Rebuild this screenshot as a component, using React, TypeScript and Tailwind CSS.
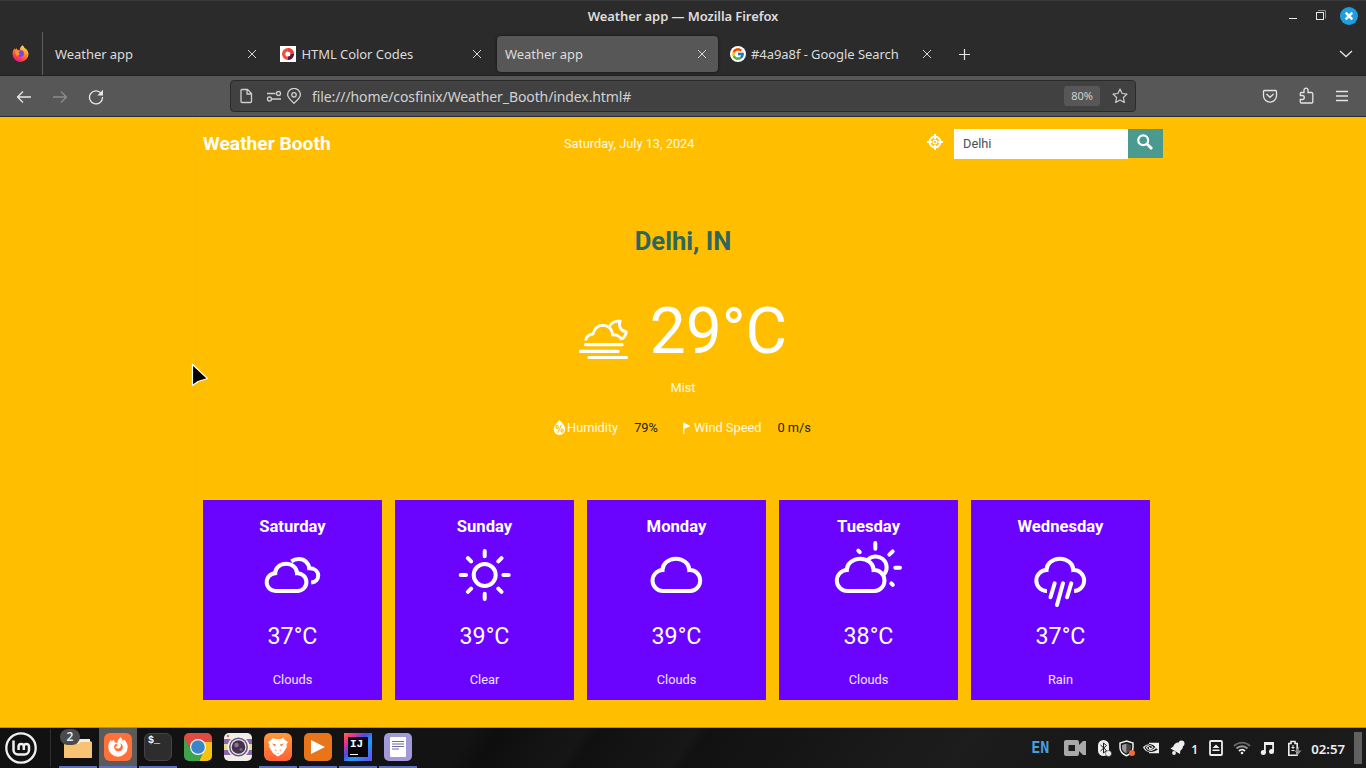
import type { ReactNode } from "react";
import { FcGoogle } from "react-icons/fc";
import { SiNvidia } from "react-icons/si";
import { WiHumidity } from "react-icons/wi";

function CloseX() {
  return (
    <svg width="10" height="10" viewBox="0 0 10 10" className="shrink-0" fill="none" stroke="#d8d8d8" strokeWidth="1">
      <path d="M1 1l8 8M9 1l-8 8" />
    </svg>
  );
}

function Tab({ title, active, icon }: { title: string; active?: boolean; icon?: ReactNode }) {
  return (
    <div className={`flex h-9 w-[221px] shrink-0 items-center rounded pr-[11px] pl-2 ${active ? "bg-[#575757] shadow-[0_0_3px_#111]" : ""}`}>
      {icon}
      <span className="flex-1 pt-0.5 tracking-[-0.06px] whitespace-nowrap">{title}</span>
      <CloseX />
    </div>
  );
}

function FirefoxLogo() {
  return (
    <svg width="17" height="17" viewBox="0 0 17 17">
      <defs>
        <linearGradient id="fx" x1="0.8" y1="0" x2="0.3" y2="1">
          <stop offset="0" stopColor="#fff04a" />
          <stop offset="0.45" stopColor="#ff8a26" />
          <stop offset="0.75" stopColor="#ff3d50" />
          <stop offset="1" stopColor="#e31587" />
        </linearGradient>
      </defs>
      <path d="M10.500.3c1 .7 1.600 1.600 2 2.600 2.400 1 4 3.500 4 6A8 8 0 0 1 .5 9c0-2.600.8-4.300 2-5.800L3 4.700 4.500 3.200l.8 1.600c1 0 1.900.2 2.400.6C7.800 3.400 8.800 1.400 10.500.3Z" fill="url(#fx)" />
      <circle cx="8.600" cy="8.600" r="3.300" fill="#7a3ff0" />
      <path d="M3.500 6.500c1.800-.8 3.700-.5 4.800.3-1 .1-1.700.8-1.900 1.400 1 .3 1.600.6 1.300 1.300-.6.7-1.800.5-2.400 1.500C3.700 10 3.200 8.300 3.500 6.500Z" fill="#ff9526" />
    </svg>
  );
}

function ColorCodesLogo() {
  return (
    <svg width="16" height="16" viewBox="0 0 16 16" className="mr-[5.5px]">
      <rect width="16" height="16" fill="#fff" />
      <g fill="none" strokeWidth="3.400">
        <circle cx="8" cy="8" r="4.300" stroke="#f0503c" />
        <path d="M12.300 8A4.300 4.300 0 0 1 8 12.300" stroke="#5a1240" />
        <path d="M8 3.700A4.300 4.300 0 0 1 12.300 8" stroke="#f03c34" />
      </g>
    </svg>
  );
}

function TitleBar() {
  return (
    <div className="flex h-8 items-center border-t border-[#3a3a3a]">
      <div className="w-[200px]" />
      <div className="flex-1 pb-0.5 text-center text-[13px] leading-4 font-semibold tracking-[-0.08px] text-[#dedede]">
        Weather app — Mozilla Firefox
      </div>
      <div className="flex w-[200px] items-center justify-end pr-2">
        <svg width="70" height="18" viewBox="0 0 70 18" fill="none" className="mb-px overflow-visible">
          <path d="M1 11.500h8" stroke="#e8e8e8" />
          <path d="M30 3.500h7.500v8" stroke="#8d8d8d" />
          <rect x="28.500" y="5.500" width="7" height="7" stroke="#e8e8e8" />
          <circle cx="61" cy="9" r="9" fill="#1e9ee0" />
          <path d="M57.700 5.700l6.600 6.600M64.300 5.700l-6.600 6.600" stroke="#fff" strokeWidth="2.400" />
        </svg>
      </div>
    </div>
  );
}

function TabStrip() {
  return (
    <div className="flex h-11 items-center border-b border-[#202020] text-[13px] text-[#dcdcdc]">
      <div className="flex h-full w-[43px] shrink-0 items-center border-r border-[#5e5e5e] pl-3">
        <FirefoxLogo />
      </div>
      <div className="ml-1 flex gap-1 pt-px">
        <Tab title="Weather app" />
        <Tab title="HTML Color Codes" icon={<ColorCodesLogo />} />
        <Tab title="Weather app" active />
        <Tab
          title="#4a9a8f - Google Search"
          icon={
            <span className="mr-[5px] flex size-4 items-center justify-center rounded-full bg-white">
              <FcGoogle size={14} />
            </span>
          }
        />
      </div>
      <svg width="13" height="13" viewBox="0 0 13 13" className="mt-px ml-[15px]" stroke="#e4e4e4" strokeWidth="1.200">
        <path d="M6.500 1v11M1 6.500h11" />
      </svg>
      <svg width="14" height="8" viewBox="0 0 14 8" className="mr-[13px] ml-auto" fill="none" stroke="#e4e4e4" strokeWidth="1.300">
        <path d="M1 1l6 5.500L13 1" />
      </svg>
    </div>
  );
}

function AddressBar() {
  return (
    <div className="flex h-[41px] items-center border-b border-[#2b2b2b] bg-[#575757]">
      <svg width="88" height="16" viewBox="0 0 88 16" className="mt-px ml-4 shrink-0" fill="none" stroke="#e8e8e8" strokeWidth="1.300">
        <path d="M15 8H1.500M7 2.500L1.500 8 7 13.500" />
        <path d="M37 8h13.500M45 2.500L50.500 8 45 13.500" stroke="#8c8c8c" />
        <path d="M85 4.200A6.500 6.500 0 1 0 86.500 8" />
        <path d="M87 .8v5.700h-5.700z" fill="#e8e8e8" stroke="none" />
      </svg>
      <div className="ml-[126px] flex h-8 w-[906px] items-center rounded border border-[#2a2a2a] bg-[#414141]">
        <svg width="62" height="16" viewBox="0 0 62 16" className="ml-[9px] shrink-0" fill="none" stroke="#cfcfcf" strokeWidth="1.300">
          <path d="M2 1.500H7.500L11.500 5.500v8a1 1 0 0 1-1 1H2a1 1 0 0 1-1-1v-11a1 1 0 0 1 1-1ZM7 1.500V6h4.500" />
          <path d="M27 5.500h8.500M32 11h9" />
          <circle cx="38.500" cy="5.500" r="2" />
          <circle cx="29.500" cy="11" r="2" />
          <path d="M54 15.200C50.500 12 47.600 9.600 47.600 6.800a6.400 6.400 0 0 1 12.800 0c0 2.800-2.900 5.400-6.400 8.400Z" />
          <circle cx="54" cy="6.800" r="2.200" />
        </svg>
        <span className="pl-[10px] text-[14px] tracking-[-0.1px] whitespace-nowrap text-[#d2d2d2]">
          file:///home/cosfinix/Weather_Booth/index.html#
        </span>
        <span className="ml-auto flex h-5 w-9 items-center justify-center rounded-[3px] bg-[#575757] text-[11px] text-[#d2d2d2]">80%</span>
        <svg width="16" height="16" viewBox="0 0 16 16" className="mr-[7px] ml-3" fill="none" stroke="#cfcfcf" strokeWidth="1.200" strokeLinejoin="round">
          <path d="M8 1l2.100 4.500 4.900.6-3.600 3.400.9 5L8 12l-4.300 2.500.9-5L1 6.100l4.900-.6z" />
        </svg>
      </div>
      <svg width="88" height="18" viewBox="0 0 88 18" className="mr-[16px] ml-auto shrink-0" fill="none" stroke="#e4e4e4" strokeWidth="1.300">
        <path d="M2.500 3.500h11a1 1 0 0 1 1 1v4.200a6.500 6.500 0 0 1-13 0V4.500a1 1 0 0 1 1-1Z" />
        <path d="M4.500 7L8 10.300 11.500 7" />
        <path d="M42 5.500V3.200a2 2 0 0 1 4 0v2.300H49.500a1.300 1.300 0 0 1 1.300 1.300V15a1 1 0 0 1-1 1h-10.500a1 1 0 0 1-1-1v-2.500h2a2 2 0 0 0 0-4h-2V6.500a1 1 0 0 1 1-1z" />
        <path d="M74 4.500h12M74 9h12M74 13.500h12" />
      </svg>
    </div>
  );
}

const cloudPath = "M76.500 51a10 10 0 0 1 -1-20.900a13 11 0 0 1 26.800 0a10 10 0 0 1 .9 20.900z";

function CardIcon({ children }: { children: ReactNode }) {
  return (
    <svg width="179" height="70" viewBox="0 0 179 70" fill="none" stroke="#fff" strokeWidth="4" strokeLinecap="round">
      {children}
    </svg>
  );
}

const forecast = [
  {
    day: "Saturday",
    temp: "37°C",
    text: "Clouds",
    icon: (
      <CardIcon>
        <path d="M73 51a8 8 0 0 1 -.8-17.800a10.500 9 0 0 1 21.800 0a8 8 0 0 1 1 17.800z" />
        <path strokeLinecap="butt" d="M88.300 21.300C90.500 19.700 93.500 19 96 19c5.500 0 9.800 4 10.200 9.300c5 0 9 2.800 9 7.200 0 4-2.700 6.700-7 7" />
      </CardIcon>
    ),
  },
  {
    day: "Sunday",
    temp: "39°C",
    text: "Clear",
    icon: (
      <CardIcon>
        <circle cx="89.700" cy="35" r="11" />
        <path d="M89.700 11v5.300M89.700 53.700V59M65.700 35H71M108.400 35h5.300M72.900 18.200l3.200 3.200M103.300 48.600l3.200 3.200M72.900 51.800l3.200-3.200M103.300 21.400l3.200-3.200" />
      </CardIcon>
    ),
  },
  {
    day: "Monday",
    temp: "39°C",
    text: "Clouds",
    icon: (
      <CardIcon>
        <path d={cloudPath} />
      </CardIcon>
    ),
  },
  {
    day: "Tuesday",
    temp: "38°C",
    text: "Clouds",
    icon: (
      <CardIcon>
        <path d={cloudPath} transform="translate(-7.700 0)" />
        <path d="M88.600 19.900A11 11 0 0 1 105.800 33.500" />
        <path d="M96.300 3v5.700M113.700 11.300l-3.400 3.400M116.300 27.700h4.700M79.300 10.700l1.500 1.500M112.300 43.300l1.500 1.500" />
      </CardIcon>
    ),
  },
  {
    day: "Wednesday",
    temp: "37°C",
    text: "Rain",
    icon: (
      <CardIcon>
        <path strokeLinecap="butt" d="M76 51a10 10 0 0 1 -.5-20.900a13 11 0 0 1 26.800 0a10 10 0 0 1 .8 20.900" />
        <path d="M83.700 43.300l-4.200 14M92 43.300L86 65M100.300 43.300l-4.200 14" />
      </CardIcon>
    ),
  },
];

function WeatherPage() {
  return (
    <main className="relative h-[611px] border-b border-[#c19100] bg-[#ffbf00] font-[Roboto,sans-serif] text-white">
      <div className="absolute top-0 left-[195px] h-full w-px bg-black/[0.025]" />
      <div className="mx-auto flex w-[960px] flex-col">
        <header className="flex h-[54px] items-center">
          <h1 className="w-[361px] text-[19.200px] leading-6 font-bold">Weather Booth</h1>
          <span className="text-[12.800px] text-white/90">Saturday, July 13, 2024</span>
          <div className="ml-auto flex items-start">
            <svg width="16" height="16" viewBox="0 0 16 16" className="mt-[5px] mr-[11px]" fill="none" stroke="#fff" strokeWidth="2">
              <circle cx="8" cy="8" r="5.400" />
              <path d="M8 0v5M8 11v5M0 8h5M11 8h5" />
              <circle cx="8" cy="8" r="1.800" strokeWidth="1.400" />
            </svg>
            <div className="flex h-[30px] w-[174px] items-center bg-white pl-[9px] text-[12.800px] text-[#495057]">Delhi</div>
            <button className="flex h-[29px] w-[35px] items-start justify-center bg-[#4a9a8f] pt-[5px] pr-px">
              <svg width="16" height="16" viewBox="0 0 16 16" fill="none" stroke="#fff">
                <circle cx="6.200" cy="6.200" r="4.900" strokeWidth="2.200" />
                <path d="M9.800 9.800L15 15" strokeWidth="2.800" />
              </svg>
            </button>
          </div>
        </header>
        <section className="flex flex-col items-center">
          <h2 className="mt-[54px] text-[25.600px] leading-8 font-bold text-[#2f655c]">Delhi, IN</h2>
          <div className="mt-[37px] flex h-[76px] items-start">
            <svg width="50" height="41" viewBox="0 0 50 41" className="mt-[25px] mr-[21px]" fill="none" stroke="#fff" strokeWidth="3.200" strokeLinecap="round">
              <path d="M6.500 25.700h36.500M1.200 32.300h38M10 38.500h37.500" />
              <g strokeWidth="2.800" strokeLinecap="butt" strokeLinejoin="round">
                <path d="M6.500 21.500C7.500 17.500 10.500 15.300 14 15c1.300-5.500 5-8.700 10-8.700 5.300 0 9.400 4 9.500 9.700 4-.5 7.500 1.500 9.300 4.700" />
                <path d="M30.500 7.300C32.500 3.500 36.500 1.500 41.300 2.200c-2.300 4.600.5 10 6 10.600-.3 3-2 5.500-4.500 7.200" />
              </g>
            </svg>
            <div className="text-[64px] leading-[76px]">29°C</div>
          </div>
          <div className="mt-2 text-[12.800px] leading-5 text-white/90">Mist</div>
          <div className="mt-5 flex h-5 items-center text-[12.800px] leading-5">
            <WiHumidity size={23} className="mb-px -mr-[4px] -ml-[7px]" />
            <span className="text-white/90">Humidity</span>
            <span className="ml-4 text-[#212529]">79%</span>
            <svg width="8" height="12" viewBox="0 0 8 12" className="ml-[25px]" fill="#fff">
              <path d="M.3.500h1.100V12H.3zM1.400 1L7.500 4 1.400 6.800z" />
            </svg>
            <span className="ml-[3px] text-white/90">Wind Speed</span>
            <span className="ml-4 text-[#212529]">0 m/s</span>
          </div>
        </section>
        <section className="mt-[62px] flex gap-[13px]">
          {forecast.map((f) => (
            <article key={f.day} className="flex h-[200px] w-[179px] shrink-0 flex-col items-center bg-[#6a04ff]">
              <h3 className="mt-[15px] text-[16.640px] leading-6 font-bold">{f.day}</h3>
              <div className="mt-px h-[70px]">{f.icon}</div>
              <div className="mt-[11px] text-[23.200px] leading-[30px] text-white">{f.temp}</div>
              <div className="mt-[19px] text-[12.800px] leading-5 text-white/90">{f.text}</div>
            </article>
          ))}
        </section>
      </div>
      <svg width="20" height="26" viewBox="0 0 20 26" className="absolute top-[246px] left-[190px]">
        <path d="M2.500 1.500V22.500L8 18.500 17.500 15.500z" fill="#000" stroke="#fff" strokeWidth="1.200" strokeLinejoin="round" />
      </svg>
    </main>
  );
}

function Launcher({ children, open, active }: { children: ReactNode; open?: boolean; active?: boolean }) {
  return (
    <div className={`relative flex h-10 w-[38px] justify-center border-b-2 pt-[5px] ${open ? "border-[#5b6fc4]" : "border-transparent"} ${active ? "bg-[#5a5a5a]" : ""}`}>
      {children}
    </div>
  );
}

function Taskbar() {
  return (
    <footer className="flex h-10 items-start bg-[#141414] bg-[linear-gradient(125deg,#111_0%,#131313_34%,#0e0e0e_36%,#161616_42%,#101010_43%,#171717_50%,#111_51%,#181818_62%,#1d1d1d_70%,#171717_80%,#1b1b1b_100%)]">
      <svg width="51" height="40" viewBox="0 0 51 40" className="shrink-0" fill="none" stroke="#f0f0f0">
        <circle cx="21" cy="20" r="14.700" strokeWidth="2.300" />
        <path d="M13.500 12.500V22a4.500 4.500 0 0 0 4.500 4.500h6.500a4.500 4.500 0 0 0 4.500-4.500v-3.500a2.600 2.600 0 0 0-5.200 0V22M23.800 18.500a2.600 2.600 0 0 0-5.200 0V22" strokeWidth="2.500" />
        <path d="M50.500 1v38" stroke="#2e2e2e" />
      </svg>
      <div className="ml-2 flex gap-[2px]">
        <Launcher open>
          <svg width="30" height="30" viewBox="0 0 30 30">
            <path d="M1 5h12l3 3h11a2 2 0 0 1 2 2v14a1 1 0 0 1-1 1H2a1 1 0 0 1-1-1z" fill="#d49a4e" />
            <path d="M14 6h13v5H14z" fill="#f0ede8" />
            <path d="M1 11h14l3-2h11v15a1 1 0 0 1-1 1H2a1 1 0 0 1-1-1z" fill="#f8c273" />
          </svg>
          <span className="absolute top-px left-px flex h-4 w-5 items-center justify-center rounded-full bg-[#4b4b4b] text-[12px] font-semibold text-[#dce8f4]">2</span>
        </Launcher>
        <Launcher open active>
          <div className="flex size-7 items-center justify-center rounded-md bg-[#ff7139]">
            <svg width="22" height="22" viewBox="0 0 22 22" fill="#fff">
              <path d="M13.500 1c1 1.300 1.900 2.500 2.200 3.700l1.500-1c2.200 2 3.500 4.600 3.500 7.300A9.700 9.700 0 0 1 11 20.700 9.700 9.700 0 0 1 1.300 11c0-3 1-5.500 2.800-7.300l.5 2L6.800 3.500l1 2.800 2.600.8c.2-2.800 1.300-4.700 3.100-6.100Z" />
              <path d="M8.500 8l2.500.8c-.3 1.200-1.500 1.700-2.700 2.200.7 2.200 5 2 5.500-.8.2-1.200-.1-2.300-.6-3.200 2.200 1.300 3.200 3.600 2.400 5.700-1.500 3.600-6.800 3.500-8.200-.2C6.700 10.700 7.300 9 8.500 8Z" fill="#ff7139" />
            </svg>
          </div>
        </Launcher>
        <Launcher open>
          <div className="h-7 w-7 rounded-md border border-[#444] bg-[#2d2d2d] pl-[3px] font-['Liberation_Mono',monospace] text-[10px] leading-[13px] font-bold text-white">
            $_
          </div>
        </Launcher>
        <Launcher>
          <svg width="28" height="28" viewBox="0 0 28 28">
            <clipPath id="chromeClip"><rect width="28" height="28" rx="5" /></clipPath>
            <g clipPath="url(#chromeClip)">
              <path d="M0 0h28v10H14L8 18 0 6z" fill="#e04a40" />
              <path d="M14 9h14v19H15l4-9z" fill="#f7c212" />
              <path d="M0 5l8 13 11 2-4 8H0z" fill="#3fa34d" />
              <circle cx="14" cy="14" r="8" fill="#f5f5f5" />
              <circle cx="14" cy="14" r="6.800" fill="#3a86c8" />
            </g>
          </svg>
        </Launcher>
        <Launcher>
          <svg width="28" height="28" viewBox="0 0 28 28">
            <rect width="28" height="28" rx="5" fill="#efeee8" />
            <path d="M0 6h28v5H0zM0 17h28v5H0z" fill="#8f66ae" />
            <path d="M0 11h28v6H0z" fill="#e6e08c" />
            <circle cx="4" cy="3" r="1.200" fill="#f35b4b" />
            <circle cx="14.500" cy="14" r="11" fill="#f3f1f0" />
            <circle cx="14.500" cy="14" r="9.500" fill="#6a5575" />
            <circle cx="14.500" cy="14" r="8" fill="#e9e6e8" />
            <circle cx="14.500" cy="14" r="6.800" fill="#44334c" />
            <circle cx="12.500" cy="12" r="2.200" fill="#8d7694" />
            <circle cx="17" cy="16.500" r="1.500" fill="#79617f" />
          </svg>
        </Launcher>
        <Launcher open>
          <div className="flex size-7 items-center justify-center rounded-md bg-linear-to-b from-[#ff9a3a] to-[#ff5e34]">
            <svg width="20" height="20" viewBox="0 0 20 20">
              <path d="M5 1l2 1h6l2-1 2.500 2.500L20 5l-1.500 2.500.3 2.500-4 6.500L10 19.500 5.200 16.500 1.200 10l.3-2.500L0 5l2.500-1.500z" fill="#fff" />
              <path d="M4 6.500l4 1L7 9.500zM16 6.500l-4 1 1 2zM6.500 12l2 1.500-.5 1zM13.500 12l-2 1.500.5 1zM8.800 16h2.400L10 16.800z" fill="#fb7138" />
            </svg>
          </div>
        </Launcher>
        <Launcher open>
          <svg width="28" height="28" viewBox="0 0 28 28">
            <rect width="28" height="28" rx="5" fill="#e8751a" />
            <path d="M7 7l14 7-14 7z" fill="#fff" />
          </svg>
        </Launcher>
        <Launcher open>
          <div className="size-7 bg-[linear-gradient(135deg,#ff6a3c_0%,#f02f8f_20%,#4b4ae8_42%,#1f9cf5_60%,#6a4cf0_100%)] p-1">
            <div className="flex size-5 flex-col bg-[#08040c] pt-[3px] pl-[2px] font-['Liberation_Mono',monospace] text-[11px] leading-[9px] font-bold text-white">
              IJ
              <span className="mt-[5px] h-px w-2 bg-white" />
            </div>
          </div>
        </Launcher>
        <Launcher open>
          <svg width="28" height="28" viewBox="0 0 28 28">
            <rect width="28" height="28" rx="5" fill="#a09ad8" />
            <rect x="6" y="4" width="16" height="20" rx="1" fill="#fff" />
            <path d="M8 8.500h12M8 11h12M8 13.500h12M8 16h7" stroke="#6d6aa0" />
          </svg>
        </Launcher>
      </div>
      <div className="ml-auto flex h-10 items-center">
        <span className="-ml-px w-[33px] font-['DejaVu_Sans_Mono',monospace] text-[15px] font-bold text-[#4a9fd8]">EN</span>
        <svg width="22" height="16" viewBox="0 0 22 16" className="mr-3">
          <path d="M2 0h11a2 2 0 0 1 2 2v3l4-4h3v14h-3l-4-4v3a2 2 0 0 1-2 2H2a2 2 0 0 1-2-2V2a2 2 0 0 1 2-2Z" fill="#a9a9a9" />
          <rect x="4.500" y="5" width="6.500" height="6" fill="#1c1c1c" />
        </svg>
        <svg width="14" height="17" viewBox="0 0 14 17" className="mr-[7px]" fill="none">
          <rect x="0" y="0" width="11" height="16" rx="5.500" fill="#eee" />
          <path d="M2.500 5l6 5.500L5.500 13V3l3 2.500-6 5.500" stroke="#1a1a1a" />
          <circle cx="10.500" cy="13.500" r="3" fill="#eee" stroke="#1a1a1a" strokeWidth=".5" />
        </svg>
        <svg width="16" height="17" viewBox="0 0 16 17" className="mr-2">
          <path d="M7.500 1l6.500 2v4.500c0 4-2.500 6.500-6.500 8.300C3.500 14 1 11.500 1 7.500V3z" fill="none" stroke="#eee" strokeWidth="1.500" />
          <path d="M7.500 3.500L12 5v3c0 2.500-2 4.500-4.500 5.500z" fill="#444" />
          <path d="M7.500 3.500L3 5v3c0 2.500 2 4.500 4.500 5.500z" fill="#999" />
          <circle cx="13" cy="13" r="3" fill="#f26a35" />
        </svg>
        <SiNvidia size={16} color="#eee" className="mr-[11px]" />
        <svg width="15" height="16" viewBox="0 0 15 16" className="mr-[6px]" fill="#eee">
          <path d="M8.500 2.500C5.500 2.500 4 4.500 3.300 6.500L.5 8.500l9.500 5.500.3-3.300c1.700-1.200 2.700-2.700 2.700-4.700z" />
          <circle cx="11.500" cy="3.500" r="3" />
          <circle cx="4" cy="13" r="1.900" />
        </svg>
        <span className="mt-[3px] w-[18px] text-[12px] font-semibold text-[#eee]">1</span>
        <svg width="14" height="16" viewBox="0 0 14 16" fill="none">
          <rect x="1" y="1" width="12" height="14" rx="1" stroke="#eee" strokeWidth="1.800" />
          <path d="M7 4.500L10.500 8h-7zM3.500 9.500h7V11h-7z" fill="#eee" />
        </svg>
        <svg width="18" height="14" viewBox="0 0 18 14" className="ml-[10px]" fill="none" stroke="#666" strokeWidth="1.800">
          <path d="M1 5c4.500-4.500 11.500-4.500 16 0" />
          <path d="M3.500 7.500c3-3 8-3 11 0" stroke="#999" />
          <path d="M6 10c1.700-1.700 4.300-1.700 6 0" stroke="#eee" />
          <circle cx="9" cy="12" r="1.300" fill="#eee" stroke="none" />
        </svg>
        <svg width="15" height="14" viewBox="0 0 15 14" className="ml-[9px]" fill="#eee">
          <path d="M4 1h10v10h-1.800V4H5.800v8H4z" />
          <circle cx="3.300" cy="11.500" r="2.500" />
          <circle cx="11.500" cy="10.500" r="2.500" />
        </svg>
        <svg width="15" height="17" viewBox="0 0 15 17" className="ml-[12px]" fill="none">
          <path d="M1.800 3.500h2.200V1.500h4v2h2.200v11.700H1.800z" stroke="#eee" strokeWidth="1.600" />
          <path d="M6 5v4M4.500 7.500h3M4.500 10.500h3" stroke="#eee" />
          <path d="M12.500 6L7.500 12h3l-1 4.500 5-6h-3z" fill="#888" />
        </svg>
        <span className="mt-[3px] ml-[9px] text-[13.200px] font-semibold text-[#eee]">02:57</span>
        <span className="mr-1 ml-[9px] h-8 w-2 bg-[#606060]" />
      </div>
    </footer>
  );
}

export default function App() {
  return (
    <div className="h-[768px] w-[1366px] overflow-hidden bg-[#2b2b2b] font-['Noto_Sans',sans-serif]">
      <TitleBar />
      <TabStrip />
      <AddressBar />
      <WeatherPage />
      <Taskbar />
    </div>
  );
}
